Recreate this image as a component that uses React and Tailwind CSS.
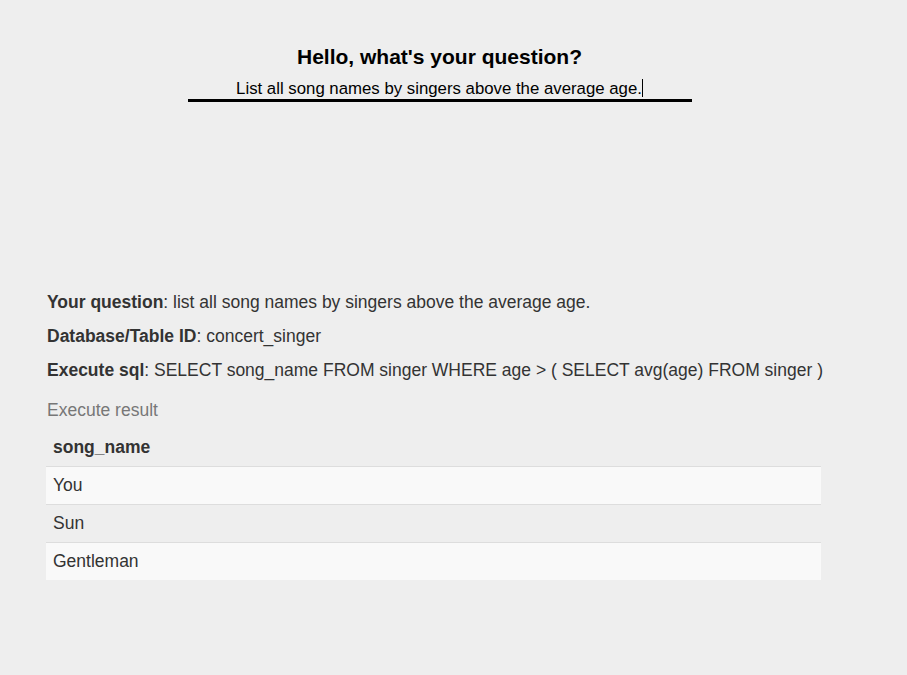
import React from "react";

export default function App() {
  const rows = ["You", "Sun", "Gentleman"];
  return (
    <div className="min-h-[675px] w-[907px] bg-[#eeeeee] text-[#333333]" style={{ fontFamily: '"Liberation Sans", Arial, sans-serif' }}>
      <div className="flex flex-col items-center pt-[45px] pr-[28px]">
        <h1 className="text-[21px] font-bold leading-[24px] text-black">Hello, what's your question?</h1>
        <div className="mt-[6px] w-[504px] border-b-[3px] border-black pt-[1px] text-center text-[16.8px] leading-[20px] text-black">
          List all song names by singers above the average age.<span className="inline-block h-[18px] w-px translate-y-[3px] bg-black" />
        </div>
      </div>
      <div className="ml-[46px] mt-[183px] w-[775px] text-[17.5px]">
        <p className="ml-px whitespace-nowrap leading-[34px]"><b>Your question</b>: list all song names by singers above the average age.</p>
        <p className="ml-px whitespace-nowrap leading-[34px]"><b>Database/Table ID</b>: concert_singer</p>
        <p className="ml-px whitespace-nowrap leading-[34px]"><b>Execute sql</b>: SELECT song_name FROM singer WHERE age &gt; ( SELECT avg(age) FROM singer )</p>
        <p className="ml-px mt-[6px] leading-[34px] text-[#777777]">Execute result</p>
        <table className="mt-[1px] w-full border-collapse">
          <thead>
            <tr>
              <th className="h-[38px] px-[7px] text-left font-bold">song_name</th>
            </tr>
          </thead>
          <tbody>
            {rows.map((r, i) => (
              <tr key={r} className={i % 2 === 0 ? "bg-[#f9f9f9]" : ""}>
                <td className="h-[38px] border-t border-[#dddddd] px-[7px]">{r}</td>
              </tr>
            ))}
          </tbody>
        </table>
      </div>
    </div>
  );
}
